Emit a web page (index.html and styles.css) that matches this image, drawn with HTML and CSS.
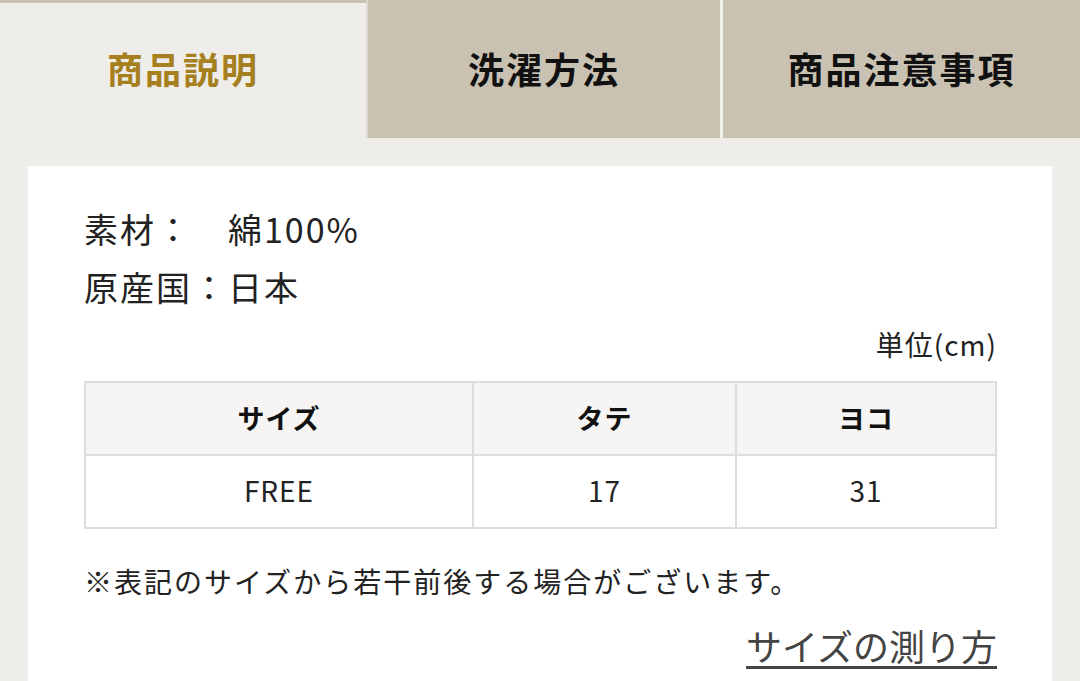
FILE: index.html
```html
<!DOCTYPE html>
<html lang="ja">
<head>
<meta charset="utf-8">
<link rel="stylesheet" href="styles.css">
</head>
<body>
<div class="tabs">
  <div class="tab active">商品説明</div>
  <div class="tab">洗濯方法</div>
  <div class="tab">商品注意事項</div>
</div>
<div class="card">
  <p class="spec">素材：　綿100%</p>
  <p class="spec">原産国：日本</p>
  <p class="unit">単位(cm)</p>
  <table class="size-table">
    <thead>
      <tr><th class="c1">サイズ</th><th class="c2">タテ</th><th class="c3">ヨコ</th></tr>
    </thead>
    <tbody>
      <tr><td>FREE</td><td>17</td><td>31</td></tr>
    </tbody>
  </table>
  <p class="note">※表記のサイズから若干前後する場合がございます。</p>
  <div class="link-row"><a class="measure" href="#">サイズの測り方</a></div>
</div>
</body>
</html>
```
FILE: styles.css
```css
html, body {
  margin: 0;
  padding: 0;
}
body {
  width: 1080px;
  height: 681px;
  overflow: hidden;
  background: #efede9;
  font-family: "Noto Sans CJK JP", "Noto Sans", sans-serif;
  color: #222;
}
.tabs {
  display: flex;
  height: 138px;
  background: #c9c2b3;
}
.tab {
  display: flex;
  align-items: center;
  justify-content: center;
  font-size: 36px;
  font-weight: 700;
  letter-spacing: 2px;
  color: #111;
  background: #c9c2b3;
  padding-bottom: 2px;
}
.tab.active {
  width: 366px;
  margin-top: 3px;
  background: #efede9;
  color: #a6801f;
  padding-bottom: 5px;
}
.tab:nth-child(2) {
  width: 352px;
  border-left: 2px solid #dcd8cf;
}
.tab:nth-child(3) {
  flex: 1;
  border-left: 3px solid #f4f2ee;
}
.card {
  margin: 28px 28px 0;
  background: #fff;
  padding: 34px 55px 0 56px;
  height: 487px;
}
.spec {
  margin: 0;
  font-size: 34px;
  letter-spacing: 2px;
  line-height: 58px;
  color: #222;
}
.unit {
  margin: 2px 0 11px;
  text-align: right;
  font-size: 28px;
  letter-spacing: 1px;
  line-height: 52px;
  color: #222;
}
.size-table {
  width: 100%;
  border-collapse: collapse;
  table-layout: fixed;
}
.size-table th, .size-table td {
  border: 2px solid #dddddd;
  text-align: center;
  height: 68px;
  padding: 0 0 3px;
  box-sizing: content-box;
  color: #222;
}
.size-table th {
  background: #f6f5f3;
  font-size: 27px;
  letter-spacing: 1px;
  font-weight: 700;
  color: #111;
}
.size-table td {
  font-size: 28px;
  letter-spacing: 1px;
}
.size-table .c1 { width: 386px; }
.size-table .c2 { width: 261px; }
.note {
  margin: 26px 0 0;
  font-size: 28px;
  letter-spacing: 2px;
  line-height: 52px;
  color: #222;
}
.link-row {
  margin-top: 10px;
  text-align: right;
  line-height: 56px;
}
.measure {
  font-size: 36px;
  color: #444;
  text-decoration: underline;
  text-underline-offset: 5px;
  text-decoration-thickness: 3px;
}
```
